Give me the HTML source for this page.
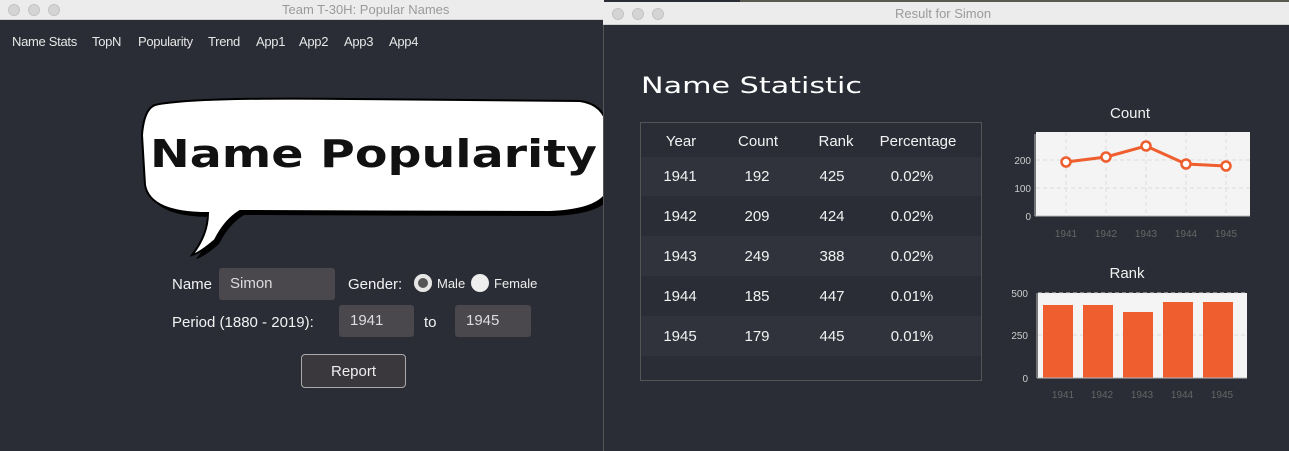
<!DOCTYPE html>
<html><head><meta charset="utf-8"><style>
*{margin:0;padding:0;box-sizing:border-box}
body{width:1289px;height:451px;overflow:hidden;background:#2a2d35;font-family:"Liberation Sans",sans-serif;position:relative}
.abs{position:absolute}
.tb{background:#ececec;border-bottom:1px solid #cfcfcf;color:#9a9a9a;font-size:13px;text-align:center}
.dot{position:absolute;width:12px;height:12px;border-radius:50%;background:#d4d4d4;border:1px solid #c4c4c4;top:4px}
.menu span{position:absolute;white-space:nowrap}
.inp{background:#4a474d;border-radius:3px;color:#ddd;font-size:15px;padding-left:11px;line-height:32px}
.t{color:#f2f2f2;font-size:15px}
</style></head><body>
<div class="abs" style="left:740px;top:0;width:549px;height:3px;background:#5a5a50"></div>
<div class="abs tb" style="left:0;top:0;width:604px;height:20px;line-height:20px">
<div class="dot" style="left:8px"></div><div class="dot" style="left:28px"></div><div class="dot" style="left:48px"></div>
<span style="position:absolute;left:282px">Team T-30H: Popular Names</span></div>
<div class="abs menu" style="left:0;top:34px;color:#e6e6e6;font-size:13px;letter-spacing:-0.3px"><span style="left:12px">Name Stats</span><span style="left:92px">TopN</span><span style="left:138px">Popularity</span><span style="left:208px">Trend</span><span style="left:256px">App1</span><span style="left:299px">App2</span><span style="left:344px">App3</span><span style="left:389px">App4</span></div>
<svg class="abs" style="left:130px;top:95px" width="480" height="165">
<path d="M25 10 Q60 2 220 4 L450 6 Q478 10 478 40 L478 95 Q470 115 420 117 L110 116 Q95 125 85 145 Q70 158 62 160 Q78 140 78 118 Q20 118 15 90 L12 40 Q14 14 25 10Z" fill="#000" transform="translate(4,4)"/>
<path d="M25 10 Q60 2 220 4 L450 6 Q478 10 478 40 L478 95 Q470 115 420 117 L110 116 Q95 125 85 145 Q70 158 62 160 Q78 140 78 118 Q20 118 15 90 L12 40 Q14 14 25 10Z" fill="#fff" stroke="#000" stroke-width="2"/>
<text x="20" y="72" font-family="DejaVu Sans" font-weight="bold" font-size="38" fill="#111" textLength="447" lengthAdjust="spacingAndGlyphs">Name Popularity</text>
</svg>
<div class="abs t" style="left:172px;top:276px">Name</div>
<div class="abs inp" style="left:219px;top:268px;width:116px;height:32px">Simon</div>
<div class="abs t" style="left:348px;top:276px">Gender:</div>
<div class="abs" style="left:414px;top:274px;width:18px;height:18px;border-radius:50%;background:#eee;box-shadow:inset 0 0 0 4px #e6e6e6,inset 0 0 0 9px #555"></div>
<div class="abs" style="left:437px;top:276px;color:#eee;font-size:13px">Male</div>
<div class="abs" style="left:471px;top:274px;width:18px;height:18px;border-radius:50%;background:#eee"></div>
<div class="abs" style="left:494px;top:276px;color:#eee;font-size:13px">Female</div>
<div class="abs t" style="left:172px;top:314px">Period (1880 - 2019):</div>
<div class="abs inp" style="left:339px;top:305px;width:75px;height:32px">1941</div>
<div class="abs t" style="left:424px;top:314px">to</div>
<div class="abs inp" style="left:455px;top:305px;width:76px;height:32px">1945</div>
<div class="abs" style="left:301px;top:354px;width:105px;height:34px;border:1px solid #aaa;border-radius:4px;background:#3a373d;color:#eee;font-size:15px;text-align:center;line-height:34px">Report</div>
<div class="abs" style="left:603px;top:2px;width:686px;height:449px;background:#2a2d35;border-left:1px solid #555"></div>
<div class="abs tb" style="left:603px;top:2px;width:686px;height:23px;line-height:24px">
<div class="dot" style="left:9px;top:6px"></div><div class="dot" style="left:29px;top:6px"></div><div class="dot" style="left:49px;top:6px"></div>
<span style="position:absolute;left:292px">Result for Simon</span></div>
<div class="abs" style="left:640px;top:122px;width:342px;height:259px;border:1px solid #555;background:#2a2d35"></div>
<div class="abs" style="left:641px;top:157px;width:340px;height:39px;background:#30333b"></div>
<div class="abs" style="left:641px;top:236px;width:340px;height:40px;background:#30333b"></div>
<div class="abs" style="left:641px;top:316px;width:340px;height:40px;background:#30333b"></div>
<svg class="abs" style="left:0;top:0" width="1289" height="451" font-family="Liberation Sans">
<text x="641" y="93" font-family="DejaVu Sans" font-size="22" fill="#fff" textLength="221" lengthAdjust="spacingAndGlyphs">Name Statistic</text>
<g fill="#f2f2f2" font-size="15" text-anchor="middle">
<text x="681" y="146">Year</text><text x="758" y="146">Count</text><text x="836" y="146">Rank</text><text x="918" y="146">Percentage</text>
<text x="680" y="181">1941</text><text x="757" y="181">192</text><text x="832" y="181">425</text><text x="912" y="181">0.02%</text>
<text x="680" y="221">1942</text><text x="757" y="221">209</text><text x="832" y="221">424</text><text x="912" y="221">0.02%</text>
<text x="680" y="261">1943</text><text x="757" y="261">249</text><text x="832" y="261">388</text><text x="912" y="261">0.02%</text>
<text x="680" y="301">1944</text><text x="757" y="301">185</text><text x="832" y="301">447</text><text x="912" y="301">0.01%</text>
<text x="680" y="341">1945</text><text x="757" y="341">179</text><text x="832" y="341">445</text><text x="912" y="341">0.01%</text>
<text x="1130" y="118" font-size="15">Count</text>
<text x="1127" y="278" font-size="15">Rank</text>
</g>
<rect x="1036" y="132" width="214" height="84" fill="#f4f4f4"/>
<g stroke="#ddd" stroke-dasharray="4 3"><line x1="1036" y1="160" x2="1250" y2="160"/><line x1="1036" y1="188" x2="1250" y2="188"/>
<line x1="1066" y1="132" x2="1066" y2="216"/><line x1="1106" y1="132" x2="1106" y2="216"/><line x1="1146" y1="132" x2="1146" y2="216"/><line x1="1186" y1="132" x2="1186" y2="216"/><line x1="1226" y1="132" x2="1226" y2="216"/></g>
<g stroke="#bbb"><line x1="1035" y1="134" x2="1035" y2="216"/><line x1="1035" y1="216" x2="1250" y2="216"/></g>
<g fill="#ccc" font-size="10" text-anchor="end"><text x="1031" y="164">200</text><text x="1031" y="192">100</text><text x="1031" y="220">0</text></g>
<g fill="#666" font-size="10" text-anchor="middle"><text x="1066" y="237">1941</text><text x="1106" y="237">1942</text><text x="1146" y="237">1943</text><text x="1186" y="237">1944</text><text x="1226" y="237">1945</text></g>
<polyline points="1066,162 1106,157 1146,146 1186,164 1226,166" fill="none" stroke="#ee5e2e" stroke-width="3"/>
<g fill="#fff" stroke="#ee5e2e" stroke-width="2.5"><circle cx="1066" cy="162" r="4.5"/><circle cx="1106" cy="157" r="4.5"/><circle cx="1146" cy="146" r="4.5"/><circle cx="1186" cy="164" r="4.5"/><circle cx="1226" cy="166" r="4.5"/></g>
<rect x="1038" y="293" width="209" height="85" fill="#f4f4f4"/>
<g stroke="#ddd" stroke-dasharray="4 3"><line x1="1038" y1="335" x2="1247" y2="335"/><line x1="1038" y1="293" x2="1247" y2="293"/></g>
<g fill="#ee5e2e"><rect x="1043" y="305" width="30" height="73"/><rect x="1083" y="305" width="30" height="73"/><rect x="1123" y="312" width="30" height="66"/><rect x="1163" y="302" width="30" height="76"/><rect x="1203" y="302" width="30" height="76"/></g>
<g stroke="#bbb"><line x1="1037" y1="293" x2="1037" y2="378"/><line x1="1037" y1="378" x2="1247" y2="378"/></g>
<g fill="#ccc" font-size="10" text-anchor="end"><text x="1028" y="297">500</text><text x="1028" y="339">250</text><text x="1028" y="382">0</text></g>
<g fill="#666" font-size="10" text-anchor="middle"><text x="1063" y="398">1941</text><text x="1102" y="398">1942</text><text x="1142" y="398">1943</text><text x="1182" y="398">1944</text><text x="1222" y="398">1945</text></g>
</svg>
</body></html>
